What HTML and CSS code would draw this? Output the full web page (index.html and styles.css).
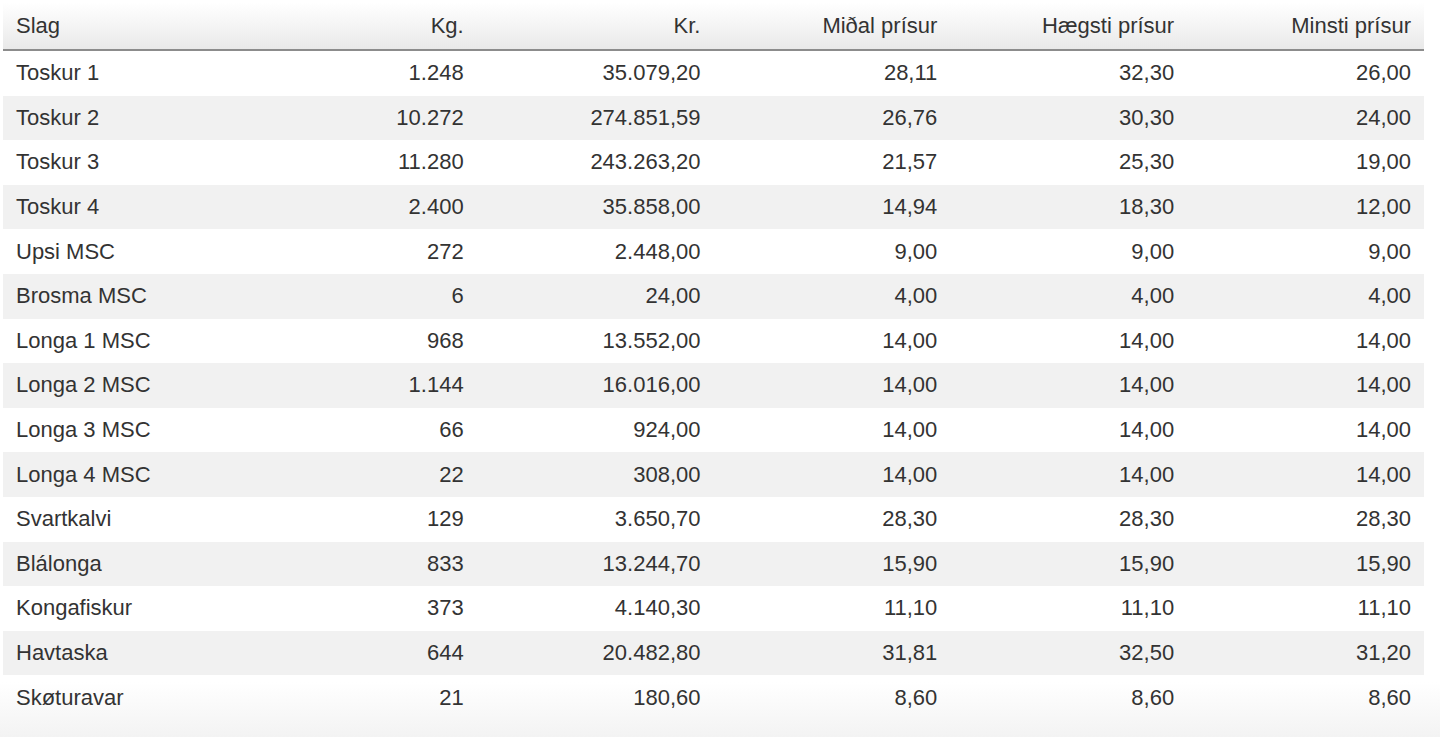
FILE: index.html
```html
<!DOCTYPE html>
<html lang="fo">
<head>
<meta charset="utf-8">
<title>Prísir</title>
<link rel="stylesheet" href="styles.css">
</head>
<body>
<div class="page">
<table class="prices">
<thead>
<tr><th class="name">Slag</th><th>Kg.</th><th>Kr.</th><th>Miðal prísur</th><th>Hægsti prísur</th><th>Minsti prísur</th></tr>
</thead>
<tbody>
<tr><td class="name">Toskur 1</td><td>1.248</td><td>35.079,20</td><td>28,11</td><td>32,30</td><td>26,00</td></tr>
<tr><td class="name">Toskur 2</td><td>10.272</td><td>274.851,59</td><td>26,76</td><td>30,30</td><td>24,00</td></tr>
<tr><td class="name">Toskur 3</td><td>11.280</td><td>243.263,20</td><td>21,57</td><td>25,30</td><td>19,00</td></tr>
<tr><td class="name">Toskur 4</td><td>2.400</td><td>35.858,00</td><td>14,94</td><td>18,30</td><td>12,00</td></tr>
<tr><td class="name">Upsi MSC</td><td>272</td><td>2.448,00</td><td>9,00</td><td>9,00</td><td>9,00</td></tr>
<tr><td class="name">Brosma MSC</td><td>6</td><td>24,00</td><td>4,00</td><td>4,00</td><td>4,00</td></tr>
<tr><td class="name">Longa 1 MSC</td><td>968</td><td>13.552,00</td><td>14,00</td><td>14,00</td><td>14,00</td></tr>
<tr><td class="name">Longa 2 MSC</td><td>1.144</td><td>16.016,00</td><td>14,00</td><td>14,00</td><td>14,00</td></tr>
<tr><td class="name">Longa 3 MSC</td><td>66</td><td>924,00</td><td>14,00</td><td>14,00</td><td>14,00</td></tr>
<tr><td class="name">Longa 4 MSC</td><td>22</td><td>308,00</td><td>14,00</td><td>14,00</td><td>14,00</td></tr>
<tr><td class="name">Svartkalvi</td><td>129</td><td>3.650,70</td><td>28,30</td><td>28,30</td><td>28,30</td></tr>
<tr><td class="name">Blálonga</td><td>833</td><td>13.244,70</td><td>15,90</td><td>15,90</td><td>15,90</td></tr>
<tr><td class="name">Kongafiskur</td><td>373</td><td>4.140,30</td><td>11,10</td><td>11,10</td><td>11,10</td></tr>
<tr><td class="name">Havtaska</td><td>644</td><td>20.482,80</td><td>31,81</td><td>32,50</td><td>31,20</td></tr>
<tr><td class="name">Skøturavar</td><td>21</td><td>180,60</td><td>8,60</td><td>8,60</td><td>8,60</td></tr>
</tbody>
</table>
</div>
</body>
</html>
```
FILE: styles.css
```css
html, body {
  margin: 0;
  padding: 0;
}
body {
  min-height: 737px;
  background: linear-gradient(to bottom, #ffffff 0, #ffffff 682px, #f3f3f3 737px);
  font-family: "Liberation Sans", Arial, Helvetica, sans-serif;
  color: #333333;
}
.page {
  padding: 3px 0 0 3px;
}
.prices {
  width: 1421px;
  border-collapse: collapse;
  table-layout: fixed;
  font-size: 22px;
}
.prices th,
.prices td {
  text-align: right;
  padding: 0 13px;
  white-space: nowrap;
  font-weight: normal;
}
.prices th.name,
.prices td.name {
  text-align: left;
}
.prices thead th {
  height: 46px;
  background: linear-gradient(to bottom, #ffffff 0%, #f4f4f4 50%, #e9e9e9 100%);
  border-bottom: 2px solid #8c8c8c;
  color: #333333;
}
.prices tbody td {
  height: 44.6px;
}
.prices tbody tr:nth-child(even) td {
  background: #f1f1f1;
}
```
